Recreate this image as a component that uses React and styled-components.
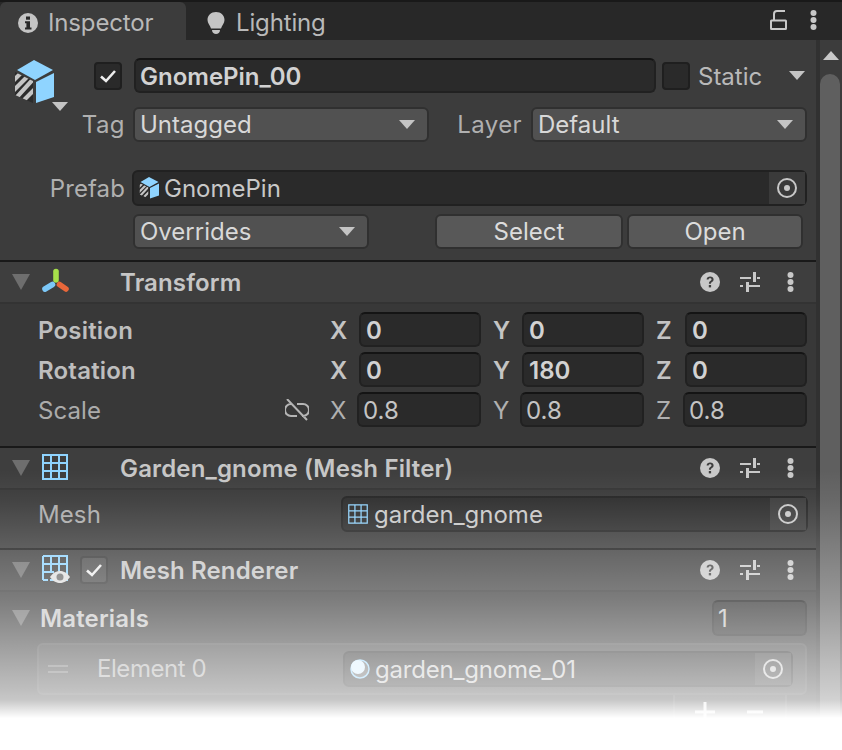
import React from "react";
import styled, { createGlobalStyle } from "styled-components";

const Global = createGlobalStyle`
  html, body { margin: 0; padding: 0; background: #fff; }
  * { box-sizing: border-box; }
`;

const Window = styled.div`
  position: relative;
  width: 842px;
  height: 750px;
  overflow: hidden;
  background: #fff;
  font-family: Inter, "Noto Sans", sans-serif;
  font-size: 24px;
  line-height: 1;
  color: #c2c2c2;
`;
const TabBar = styled.div`
  display: flex;
  align-items: stretch;
  height: 40px;
  border-top: 2px solid #191919;
  background: #282828;
`;
const Tab = styled.div`
  display: flex;
  align-items: center;
  gap: ${p => p.$gap}px;
  width: 186px;
  padding: 4px 0 0 ${p => p.$pad}px;
  background: ${p => (p.$active ? "#3c3c3c" : "transparent")};
  border-radius: ${p => (p.$active ? "6px 6px 0 0" : "0")};
  color: #b9b9b9;
  letter-spacing: -0.15px;
`;
const TabTools = styled.div`
  margin-left: auto;
  display: flex;
  align-items: center;
  gap: 23px;
  padding: 0 25px 2px 0;
  svg { display: block; }
`;
const Body = styled.div`
  display: flex;
  height: 708px;
  background: #3c3c3c;
`;
const Content = styled.div`
  width: 816px;
  flex: none;
`;
const Scrollbar = styled.div`
  width: 26px;
  border-left: 4px solid #313131;
  padding-top: 11px;
  display: flex;
  flex-direction: column;
`;
const ScrollUp = styled.div`
  height: 23px;
  padding-left: 3px;
  svg { display: block; }
`;
const ScrollThumb = styled.div`
  width: 20px;
  flex: 1;
  background: #5f5f5f;
  border-radius: 10px 10px 0 0;
`;
const ObjectHead = styled.div`
  padding: 18px 9px 11px 0;
`;
const Row = styled.div`
  display: flex;
  align-items: center;
  height: ${p => p.$h || 35}px;
  margin-top: ${p => p.$mt || 0}px;
`;
const BigIcon = styled.div`
  width: 94px;
  flex: none;
  padding: 2px 0 0 14px;
  align-self: flex-start;
  height: 35px;
  svg { display: block; overflow: visible; }
`;
const CubeCaret = styled.div`
  position: absolute;
  left: 52px;
  top: 102px;
`;
const Check = styled.div`
  width: 28px;
  height: 28px;
  flex: none;
  border: 2px solid ${p => p.$border || "#1f1f1f"};
  border-radius: 4px;
  background: ${p => p.$bg || "#2a2a2a"};
  display: flex;
  align-items: center;
  justify-content: center;
`;
const Field = styled.div`
  display: flex;
  align-items: center;
  height: ${p => p.$h || 35}px;
  width: ${p => p.$w}px;
  flex: none;
  margin-left: ${p => p.$ml || 0}px;
  padding: 2px 0 0 ${p => p.$pl ?? 6}px;
  background: #2a2a2a;
  border: 2px solid #212121;
  border-top-color: #141414;
  border-radius: 6px;
  color: ${p => (p.$bold ? "#d2d2d2" : "#c4c4c4")};
  font-weight: ${p => (p.$bold ? 600 : 400)};
  overflow: hidden;
`;
const StaticLabel = styled.span`
  margin-left: 8px;
  width: 91px;
  flex: none;
  color: #b9b9b9;
  padding-top: 2px;
`;
const Dropdown = styled.div`
  display: flex;
  align-items: center;
  justify-content: space-between;
  height: 35px;
  width: ${p => p.$w}px;
  flex: none;
  padding: 0 12px 0 5px;
  background: #515151;
  border: 2px solid #303030;
  border-radius: 6px;
  color: #d8d8d8;
`;
const SideLabel = styled.span`
  width: ${p => p.$w}px;
  flex: none;
  text-align: right;
  color: #b0b0b0;
  letter-spacing: ${p => p.$ls ?? 0.4}px;
  padding-top: ${p => p.$pt || 0}px;
`;
const Spacer = styled.div`
  flex: none;
  width: ${p => p.$w}px;
`;
const PushButton = styled.div`
  display: flex;
  align-items: center;
  justify-content: center;
  height: 35px;
  width: ${p => p.$w}px;
  flex: none;
  margin-left: ${p => p.$ml || 0}px;
  background: #585858;
  border: 2px solid #303030;
  border-radius: 6px;
  color: #dcdcdc;
`;
const ObjectField = styled.div`
  display: flex;
  align-items: center;
  gap: ${p => p.$gap ?? 5}px;
  height: 36px;
  width: ${p => p.$w}px;
  flex: none;
  margin-left: ${p => p.$ml || 0}px;
  padding-left: 5px;
  background: #2a2a2a;
  border: 2px solid #212121;
  border-radius: 6px;
  color: #c8c8c8;
`;
const FieldText = styled.span`
  padding-top: 2px;
  letter-spacing: ${p => p.$ls || 0}px;
`;
const Picker = styled.div`
  margin-left: auto;
  align-self: stretch;
  width: 36px;
  background: #3a3a3a;
  display: flex;
  align-items: center;
  justify-content: center;
  flex: none;
`;
const Header = styled.div`
  display: flex;
  align-items: center;
  height: 44px;
  padding: 0 22px 0 12px;
  background: #3e3e3e;
  border-top: 2px solid #191919;
  border-bottom: 2px solid #333333;
`;
const HeaderIcon = styled.div`
  width: 31px;
  margin: -2px 0 0 12px;
  flex: none;
  svg { display: block; overflow: visible; }
`;
const HeaderCheck = styled.div`
  flex: none;
  margin-left: 7px;
  width: 33px;
`;
const Title = styled.span`
  margin-left: ${p => p.$ml}px;
  padding-top: 2px;
  font-weight: 600;
  letter-spacing: 0.15px;
  color: #c6c6c6;
`;
const Tools = styled.div`
  margin-left: auto;
  display: flex;
  align-items: center;
  svg { display: block; }
`;
const ToolSlot = styled.div`
  margin-left: ${p => p.$ml || 0}px;
`;
const Section = styled.div`
  background: #383838;
  padding: ${p => p.$pt}px 9px ${p => p.$pb}px 0;
`;
const PropRow = styled.div`
  display: flex;
  align-items: center;
  height: ${p => p.$h || 35}px;
  margin-top: ${p => p.$mt || 0}px;
  padding-left: 38px;
`;
const PropLabel = styled.span`
  padding-top: 2px;
  font-weight: ${p => (p.$bold ? 600 : 400)};
  letter-spacing: ${p => (p.$bold ? "0.2px" : "0.1px")};
  color: ${p => (p.$bold ? "#bebebe" : "#ababab")};
`;
const LinkBox = styled.div`
  margin-left: auto;
  margin-right: 21px;
  svg { display: block; }
`;
const Vector = styled.div`
  display: flex;
  justify-content: space-between;
  width: 477px;
  margin-left: ${p => (p.$auto ? "auto" : "0")};
  flex: none;
`;
const Axis = styled.div`
  display: flex;
  align-items: center;
  justify-content: space-between;
  width: 151px;
  span {
    padding-top: 2px;
    font-weight: ${p => (p.$bold ? 600 : 400)};
    color: ${p => (p.$bold ? "#c4c4c4" : "#b0b0b0")};
  }
`;
const MaterialsRow = styled.div`
  display: flex;
  align-items: center;
  height: 36px;
  padding-left: 12px;
`;
const MaterialsTitle = styled.span`
  margin: 0 auto 0 10px;
  padding-top: 2px;
  font-weight: 600;
  letter-spacing: 0.15px;
  color: #c6c6c6;
`;
const ListBox = styled.div`
  display: flex;
  align-items: center;
  height: 52px;
  margin: 7px 0 0 37px;
  padding-left: 9px;
  border: 2px solid #4a4a4a;
  border-radius: 6px;
  background: #414141;
`;
const Handle = styled.div`
  width: 20px;
  height: 8px;
  flex: none;
  border-top: 2px solid #6c6c6c;
  border-bottom: 2px solid #6c6c6c;
`;
const ElementLabel = styled.span`
  margin-left: 29px;
  width: 246px;
  flex: none;
  color: #ababab;
  letter-spacing: -0.45px;
`;
const ListFooter = styled.div`
  display: flex;
  align-items: flex-start;
  gap: 32px;
  height: 34px;
  width: 114px;
  margin-left: 673px;
  padding: 7px 0 0 20px;
  border-left: 2px solid #4a4a4a;
  border-right: 2px solid #4a4a4a;
  background: #3c3c3c;
  svg { display: block; flex: none; }
`;
const Fade = styled.div`
  position: absolute;
  left: 0;
  right: 0;
  top: 470px;
  bottom: 0;
  pointer-events: none;
  background: linear-gradient(
    to bottom,
    rgba(255, 255, 255, 0) 0,
    rgba(255, 255, 255, 0.06) 30px,
    rgba(255, 255, 255, 0.35) 130px,
    rgba(255, 255, 255, 0.68) 220px,
    rgba(255, 255, 255, 0.72) 230px,
    rgba(255, 255, 255, 1) 248px
  );
`;

const Caret = ({ w = 16, h = 9, c = "#c4c4c4" }) => (
  <svg width={w} height={h} viewBox="0 0 16 9" style={{ flex: "none", display: "block" }}>
    <path d="M0 0H16L8 9Z" fill={c} />
  </svg>
);
const Foldout = () => (
  <svg width="18" height="16" viewBox="0 0 18 16" style={{ flex: "none", display: "block" }}>
    <path d="M0 0H18L9 16Z" fill="#6e6e6e" />
  </svg>
);
const Tick = ({ c = "#eeeeee" }) => (
  <svg width="18" height="16" viewBox="0 0 18 16">
    <path d="M2 8.5 7 13 16 3" fill="none" stroke={c} strokeWidth="2.6" />
  </svg>
);
const Cube = ({ size = 40 }) => {
  const id = `hatch${size}`;
  return (
    <svg width={size} height={size * 1.075} viewBox="0 0 40 43" style={{ flex: "none" }}>
      <defs>
        <clipPath id={id}>
          <path d="M1 12 19 21V43L1 35Z" />
        </clipPath>
      </defs>
      <path d="M20 0 39 10 21 20 3 10Z" fill="#8fd4ff" />
      <path d="M40 13V37L22 43V22Z" fill="#8fd4ff" />
      <g clipPath={`url(#${id})`}>
        <rect x="0" y="10" width="20" height="34" fill="#2b2b2b" />
        <path d="M-4 24 10 10M-4 34 20 10M2 38 24 14M10 40 26 24" stroke="#c4c4c4" strokeWidth="4.2" />
      </g>
    </svg>
  );
};
const Info = () => (
  <svg width="20" height="20" viewBox="0 0 20 20" style={{ flex: "none" }}>
    <circle cx="10" cy="10" r="10" fill="#c4c4c4" />
    <rect x="8" y="3.5" width="4" height="3.2" fill="#282828" />
    <path d="M7 8.3H12V14.5H13.5V16.4H7V14.5H8.4V10.2H7Z" fill="#282828" />
  </svg>
);
const Bulb = () => (
  <svg width="18" height="22" viewBox="0 0 18 22" style={{ flex: "none" }}>
    <path d="M9 0C4 0 0.5 3.5 0.5 8c0 3.500 2.500 5.200 3.500 8.500H14C15 13.200 17.500 11.500 17.500 8 17.500 3.500 14 0 9 0Z" fill="#c4c4c4" />
    <path d="M5 18H13C13 20.500 11 22 9 22S5 20.500 5 18Z" fill="#c4c4c4" />
  </svg>
);
const Lock = () => (
  <svg width="17" height="20" viewBox="0 0 17 20">
    <rect x="1" y="10.500" width="15" height="8.500" rx="0.500" fill="none" stroke="#c8c8c8" strokeWidth="2" />
    <path d="M4 10.500V4Q4 1 7 1H15" fill="none" stroke="#c8c8c8" strokeWidth="2" />
  </svg>
);
const Dots = ({ c = "#c8c8c8" }) => (
  <svg width="7" height="20" viewBox="0 0 7 20">
    <circle cx="3.500" cy="3" r="3" fill={c} />
    <circle cx="3.500" cy="10" r="3" fill={c} />
    <circle cx="3.500" cy="17" r="3" fill={c} />
  </svg>
);
const Help = () => (
  <svg width="20" height="20" viewBox="0 0 20 20">
    <circle cx="10" cy="10" r="10" fill="#c8c8c8" />
    <path d="M6.600 7.400C6.800 5.600 8.200 4.600 10.100 4.600c2 0 3.500 1.100 3.500 2.900 0 2.400-2.700 2.300-2.700 4.300H8.900c0-3 2.600-2.900 2.600-4.300 0-.8-.6-1.200-1.400-1.200-.9 0-1.400.5-1.500 1.200Z" fill="#3e3e3e" />
    <rect x="8.800" y="13" width="2.300" height="2.400" fill="#3e3e3e" />
  </svg>
);
const Sliders = () => (
  <svg width="20" height="20" viewBox="0 0 20 20">
    <path d="M0 6H11M17 6H20M3 14H0M9 14H20" stroke="#c8c8c8" strokeWidth="2" fill="none" />
    <rect x="13" y="0" width="3" height="10" fill="#c8c8c8" />
    <rect x="6" y="10" width="3" height="10" fill="#c8c8c8" />
  </svg>
);
const Target = () => (
  <svg width="20" height="20" viewBox="0 0 20 20" style={{ display: "block" }}>
    <circle cx="10" cy="10" r="9" fill="none" stroke="#c8c8c8" strokeWidth="2" />
    <circle cx="10" cy="10" r="3" fill="#c8c8c8" />
  </svg>
);
const Axes = () => (
  <svg width="27" height="24" viewBox="0 0 27 24">
    <path d="M14 2.500V11" stroke="#a6e04a" strokeWidth="5.600" strokeLinecap="round" />
    <path d="M10.500 15.500 3 20" stroke="#7cc8f8" strokeWidth="5.600" strokeLinecap="round" />
    <path d="M17.500 15.500 24 20" stroke="#e8673a" strokeWidth="5.600" strokeLinecap="round" />
  </svg>
);
const Grid = ({ s = 26, c = "#8fd4ff", w = 2 }) => (
  <svg width={s} height={s} viewBox="0 0 26 26" style={{ display: "block", flex: "none" }}>
    <path d="M1 1H25V25H1ZM9 1V25M17 1V25M1 9H25M1 17H25" fill="none" stroke={c} strokeWidth={w} />
  </svg>
);
const GridEye = () => (
  <svg width="28" height="28" viewBox="0 0 28 28">
    <path d="M1 1H25V25H8M1 25V1M9 1V18M17 1V16M1 9H25M1 17H12M1 25H6" fill="none" stroke="#8fd4ff" strokeWidth="2" />
    <path d="M8 22C11 17.500 15 16 18 16S25 17.500 28 22C25 26.500 21 28 18 28S11 26.500 8 22Z" fill="#dedede" />
    <circle cx="18" cy="22" r="3.500" fill="#6a6a6a" />
  </svg>
);
const Unlink = () => (
  <svg width="24" height="22" viewBox="0 0 24 22" style={{ display: "block" }}>
    <path d="M7 5H6a5.500 5.500 0 0 0 0 12h6M12 5h6a5.500 5.500 0 0 1 0 12h-1M2 0 22 21" fill="none" stroke="#b5b5b5" strokeWidth="2" />
  </svg>
);
const Sphere = () => (
  <svg width="20" height="20" viewBox="0 0 20 20" style={{ flex: "none" }}>
    <circle cx="10" cy="10" r="9" fill="#5d5d5d" stroke="#8fd4ff" strokeWidth="1.500" />
    <circle cx="8" cy="8" r="7" fill="#d8f0ff" />
  </svg>
);
const Plus = () => (
  <svg width="20" height="20" viewBox="0 0 20 20">
    <path d="M10 0V20M0 10H20" stroke="#e6e6e6" strokeWidth="3" />
  </svg>
);
const Minus = () => (
  <svg width="16" height="20" viewBox="0 0 16 20">
    <path d="M0 10H16" stroke="#e6e6e6" strokeWidth="3" />
  </svg>
);

const VectorRow = ({ values, bold, w }) => (
  <Vector $auto={bold}>
    {["X", "Y", "Z"].map((a, i) => (
      <Axis key={a} $bold={bold}>
        <span>{a}</span>
        <Field $w={w} $pl={bold ? 5 : 4} $bold={bold}>{values[i]}</Field>
      </Axis>
    ))}
  </Vector>
);

const ComponentHeader = ({ icon, check, titleMl, children }) => (
  <Header>
    <Foldout />
    <HeaderIcon>{icon}</HeaderIcon>
    {check && (
      <HeaderCheck>
        <Check $bg="#4d4d4d" $border="#343434"><Tick /></Check>
      </HeaderCheck>
    )}
    <Title $ml={titleMl}>{children}</Title>
    <Tools>
      <ToolSlot><Help /></ToolSlot>
      <ToolSlot $ml={20}><Sliders /></ToolSlot>
      <ToolSlot $ml={27}><Dots /></ToolSlot>
    </Tools>
  </Header>
);

export default function App() {
  return (
    <Window>
      <Global />
      <TabBar>
        <Tab $active $gap={10} $pad={18}>
          <Info />
          Inspector
        </Tab>
        <Tab $gap={11} $pad={21}>
          <Bulb />
          Lighting
        </Tab>
        <TabTools>
          <Lock />
          <Dots />
        </TabTools>
      </TabBar>
      <Body>
        <Content>
          <ObjectHead>
            <Row>
              <BigIcon><Cube /></BigIcon>
              <Check><Tick /></Check>
              <Field $w={522} $ml={12} $pl={4} $bold>GnomePin_00</Field>
              <Spacer $w={6} />
              <Check />
              <StaticLabel>Static</StaticLabel>
              <Caret />
            </Row>
            <Row $mt={14}>
              <SideLabel $w={125}>Tag</SideLabel>
              <Spacer $w={8} />
              <Dropdown $w={296}>Untagged<Caret /></Dropdown>
              <SideLabel $w={93}>Layer</SideLabel>
              <Spacer $w={9} />
              <Dropdown $w={276}>Default<Caret /></Dropdown>
            </Row>
            <Row $mt={28} $h={36}>
              <SideLabel $w={125} $ls={0.1} $pt={2}>Prefab</SideLabel>
              <Spacer $w={7} />
              <ObjectField $w={675}>
                <Cube size={20} />
                <FieldText>GnomePin</FieldText>
                <Picker><Target /></Picker>
              </ObjectField>
            </Row>
            <Row $mt={8}>
              <Spacer $w={133} />
              <Dropdown $w={236}>Overrides<Caret /></Dropdown>
              <PushButton $w={188} $ml={66}>Select</PushButton>
              <PushButton $w={176} $ml={4}>Open</PushButton>
            </Row>
          </ObjectHead>
          <ComponentHeader icon={<Axes />} titleMl={47}>Transform</ComponentHeader>
          <Section $pt={8} $pb={19}>
            <PropRow>
              <PropLabel $bold>Position</PropLabel>
              <VectorRow bold values={["0", "0", "0"]} w={122} />
            </PropRow>
            <PropRow $mt={5}>
              <PropLabel $bold>Rotation</PropLabel>
              <VectorRow bold values={["0", "180", "0"]} w={122} />
            </PropRow>
            <PropRow $mt={5}>
              <PropLabel>Scale</PropLabel>
              <LinkBox><Unlink /></LinkBox>
              <VectorRow values={["0.8", "0.8", "0.8"]} w={124} />
            </PropRow>
          </Section>
          <ComponentHeader icon={<Grid />} titleMl={47}>Garden_gnome (Mesh Filter)</ComponentHeader>
          <Section $pt={6} $pb={16}>
            <PropRow $h={36}>
              <PropLabel>Mesh</PropLabel>
              <ObjectField $w={467} $ml={240} $gap={6}>
                <Grid s={20} w={1.600} />
                <FieldText>garden_gnome</FieldText>
                <Picker><Target /></Picker>
              </ObjectField>
            </PropRow>
          </Section>
          <ComponentHeader icon={<GridEye />} check titleMl={7}>Mesh Renderer</ComponentHeader>
          <Section $pt={8} $pb={0}>
            <MaterialsRow>
              <Foldout />
              <MaterialsTitle>Materials</MaterialsTitle>
              <Field $w={95} $h={36} $pl={4}>1</Field>
            </MaterialsRow>
            <ListBox>
              <Handle />
              <ElementLabel>Element 0</ElementLabel>
              <ObjectField $w={450} $gap={5}>
                <Sphere />
                <FieldText $ls={-0.2}>garden_gnome_01</FieldText>
                <Picker><Target /></Picker>
              </ObjectField>
            </ListBox>
            <ListFooter>
              <Plus />
              <Minus />
            </ListFooter>
          </Section>
        </Content>
        <Scrollbar>
          <ScrollUp>
            <svg width="16" height="9" viewBox="0 0 16 9"><path d="M0 9H16L8 0Z" fill="#c8c8c8" /></svg>
          </ScrollUp>
          <ScrollThumb />
        </Scrollbar>
      </Body>
      <CubeCaret><Caret /></CubeCaret>
      <Fade />
    </Window>
  );
}
